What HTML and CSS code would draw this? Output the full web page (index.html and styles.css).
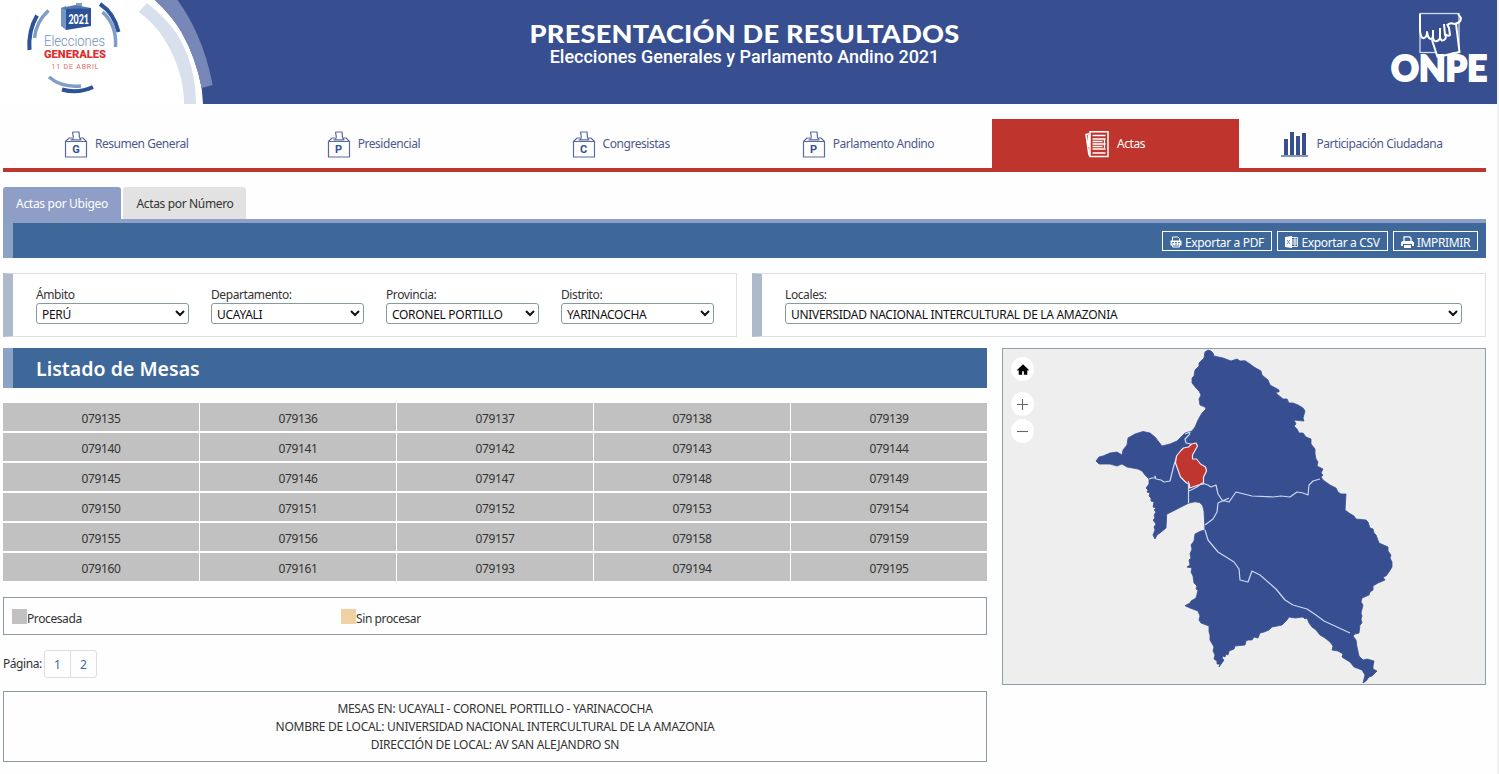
FILE: index.html
```html
<!DOCTYPE html>
<html lang="es">
<head>
<meta charset="utf-8">
<title>Presentación de Resultados</title>
<link rel="stylesheet" href="styles.css">
</head>
<body>
<svg class="defs" width="0" height="0">
  <symbol id="urn" viewBox="0 0 24 28">
    <path d="M1.500 10.500h21v15.500h-21zM1.500 10.500l3.500-3.500h3M22.500 10.500l-3.500-3.500h-2.500M8.500 1h6.500l.5 5.500 1.500 2.500M8.500 1l.8 5-.8 2.700M6.500 8.800h11" fill="none" stroke="#5a6a9f" stroke-width="1.200"/>
  </symbol>
</svg>
<header class="header">
  <svg class="brand" viewBox="0 0 220 104" width="220" height="104">
    <path d="M0 0H155Q173 17 182 33Q196 58 201.700 88L203 104H0z" fill="#fff"/>
    <path d="M155 0H177.500Q189 16 197 34Q207 56 212.700 85L201.700 88Q196 58 182 33Q173 17 155 0z" fill="#7788b8"/>
    <path d="M147 3Q166 18 177 34Q196 65 196 104H184Q184 70 163 37Q153 22 138.500 12z" fill="#d9e0ed"/>
    <g fill="none" stroke-width="4">
      <path d="M29.500 50Q28 31 37 15.500" stroke="#2c5298"/>
      <path d="M34.500 38Q36 22 48.500 10.500" stroke="#7f9dc6" stroke-width="3.500"/>
      <path d="M100 4Q114 13 118.500 32" stroke="#2c5298"/>
      <path d="M102.500 12Q117 25 115.500 47" stroke="#7f9dc6" stroke-width="3.500"/>
      <path d="M49 77Q62 88 81 86" stroke="#7f9dc6" stroke-width="3.500"/>
      <path d="M62 89.500Q78 94 93 87" stroke="#2c5298"/>
    </g>
    <path d="M76 3h6v6h-6z" fill="#7f9dc6"/>
    <path d="M61 8l5-2v24l-5-4z" fill="#7595c6"/>
    <path d="M61 8l14-3 16 3-25 2z" fill="#5578b0"/>
    <path d="M66 9l25-1v18l-25 4z" fill="#2c5298"/>
    <text x="68.500" y="23.500" textLength="20.500" lengthAdjust="spacingAndGlyphs" class="lg-year">2021</text>
    <text x="44" y="46" textLength="61" lengthAdjust="spacingAndGlyphs" class="lg-thin">Elecciones</text>
    <text x="44" y="58" textLength="62" lengthAdjust="spacingAndGlyphs" class="lg-red">GENERALES</text>
    <text x="51.500" y="69" textLength="47" class="lg-date">11 DE ABRIL</text>
  </svg>
  <div class="titles">
    <h1>PRESENTACIÓN DE RESULTADOS</h1>
    <p>Elecciones Generales y Parlamento Andino 2021</p>
  </div>
  <svg class="onpe" viewBox="1388 8 102 80" width="102" height="80">
    <rect x="1420" y="13.500" width="39" height="39" fill="none" stroke="#cfdcf3" stroke-width="1.300"/>
    <path d="M1456 25l3 26-22 5-5-16z" fill="#374f91"/>
    <path d="M1420 14V31q1 8 4 7t3-6q1 7 4 7 2 0 2-4M1433 30v8q1 4 4 3t3-4V28M1440 37q1 5 4 3t1-5l-1-11M1445 34q3 3 5 1l-1-7-2-4M1447 25q4-3 7-1 7-1 7-6l-3-4M1456 24l3.500 28-22 5-5.500-17" fill="none" stroke="#fff" stroke-width="2" stroke-linejoin="round"/>
    <text x="1391" y="80.500" textLength="96" lengthAdjust="spacingAndGlyphs" class="lg-onpe">ONPE</text>
  </svg>
</header>
<main class="main">
  <nav class="nav">
    <a class="nav-item"><span class="urn"><svg viewBox="0 0 24 28"><use href="#urn"/></svg><b>G</b></span>Resumen General</a>
    <a class="nav-item"><span class="urn"><svg viewBox="0 0 24 28"><use href="#urn"/></svg><b>P</b></span>Presidencial</a>
    <a class="nav-item"><span class="urn"><svg viewBox="0 0 24 28"><use href="#urn"/></svg><b>C</b></span>Congresistas</a>
    <a class="nav-item"><span class="urn"><svg viewBox="0 0 24 28"><use href="#urn"/></svg><b>P</b></span>Parlamento Andino</a>
    <a class="nav-item active"><svg width="24" height="28" viewBox="0 0 24 28"><path d="M5 1.800h18v24.700H5zM5 3.500L1 4.500 4 25.500M3.500 5v12" fill="none" stroke="#fff" stroke-width="1.500"/><path d="M7.500 5.500h13M7.500 9h13M7.500 11.500h10M7.500 14h13M7.500 16.500h10M7.500 19h13M7.500 23h13M19.500 9v9" stroke="#fff" stroke-width="1.300"/></svg>Actas</a>
    <a class="nav-item"><svg width="27" height="28" viewBox="0 0 27 28"><path d="M3 9h4v16H3zM9 2h4v23H9zM15 6h4v19h-4zM21 3h4v22h-4z" fill="#374f91"/><path d="M0 26h27" stroke="#8795bd" stroke-width="2"/></svg>Participación Ciudadana</a>
  </nav>
  <div class="tabs"><a class="tab on">Actas por Ubigeo</a><a class="tab">Actas por Número</a></div>
  <div class="toolbar">
    <a class="btn b1"><svg width="12" height="12" viewBox="0 0 12 12"><path d="M2.500 5V1h5.500l1.500 1.500V5M2.500 9v2h7V9" fill="none" stroke="#fff"/><path d="M.5 4.500h11v5H.5z" fill="#fff"/><path d="M2 6.500h2M5 6.500h2M8 6.500h2M2 8h1M5 8h2M8 8h1" stroke="#3e679a" stroke-width=".8"/></svg>Exportar a PDF</a>
    <a class="btn b2"><svg width="13" height="12" viewBox="0 0 13 12"><path d="M0 1l7-1v12l-7-1z" fill="#fff"/><path d="M7 1.500h5.500v9H7M7 4h5M7 6h5M7 8h5M10 2v8" fill="none" stroke="#fff" stroke-width=".9"/><path d="M2.200 4l2.500 4M4.700 4L2.200 8" stroke="#7c9abf"/></svg>Exportar a CSV</a>
    <a class="btn b3"><svg width="13" height="12" viewBox="0 0 13 12"><path d="M3 5V.8h5.500L10 2.300V5" fill="none" stroke="#fff" stroke-width="1.300"/><path d="M1.500 5h10l1.500 1.500V10h-2V8H2v2H0V6.500zM3 9h7v3H3z" fill="#fff"/></svg>IMPRIMIR</a>
  </div>
  <div class="filters">
    <section class="panel four">
      <label>Ámbito<select><option>PERÚ</option></select></label>
      <label>Departamento:<select><option>UCAYALI</option></select></label>
      <label>Provincia:<select><option>CORONEL PORTILLO</option></select></label>
      <label>Distrito:<select><option>YARINACOCHA</option></select></label>
    </section>
    <section class="panel one">
      <label>Locales:<select><option>UNIVERSIDAD NACIONAL INTERCULTURAL DE LA AMAZONIA</option></select></label>
    </section>
  </div>
  <div class="columns">
    <div class="left">
      <h2>Listado de Mesas</h2>
      <div class="mesas">
        <a>079135</a><a>079136</a><a>079137</a><a>079138</a><a>079139</a>
        <a>079140</a><a>079141</a><a>079142</a><a>079143</a><a>079144</a>
        <a>079145</a><a>079146</a><a>079147</a><a>079148</a><a>079149</a>
        <a>079150</a><a>079151</a><a>079152</a><a>079153</a><a>079154</a>
        <a>079155</a><a>079156</a><a>079157</a><a>079158</a><a>079159</a>
        <a>079160</a><a>079161</a><a>079193</a><a>079194</a><a>079195</a>
      </div>
      <div class="legend"><span><i class="gray"></i>Procesada</span><span><i class="sand"></i>Sin procesar</span></div>
      <div class="pager">Página:<div class="pages"><a>1</a><a>2</a></div></div>
      <div class="info"><p>MESAS EN: UCAYALI - CORONEL PORTILLO - YARINACOCHA</p><p>NOMBRE DE LOCAL: UNIVERSIDAD NACIONAL INTERCULTURAL DE LA AMAZONIA</p><p>DIRECCIÓN DE LOCAL: AV SAN ALEJANDRO SN</p></div>
    </div>
    <div class="map">
      <svg viewBox="1003 349 482 335" width="482" height="335">
        <path fill="#374f91" stroke="#374f91" stroke-width=".8" stroke-linejoin="round" d="M1208 350L1205 352 1204 358 1199 363 1199 366 1195 370 1194 376 1192 378 1192 383 1196 388 1199 391 1201 395 1199 399 1200 405 1205 407 1206 409 1202 413 1198 420 1195 427 1192 431 1185 433 1177 441 1170 444 1162 446 1155 437 1150 433 1143 431.500 1135 434 1128 438 1127 445 1123 450 1122 455 1117 452 1110 453 1103 456 1099 457 1096 461 1099 464 1110 464 1117 466 1122 464 1127 467 1138 469 1142 471 1145 475 1149 479 1149 484 1146 488 1148 490 1147 492 1150 493 1149 496 1151 498 1151 501 1154 502 1153 507 1156 508 1154 510 1156 512 1154 515 1155 518 1153 520 1156 524 1154 527 1155 530 1153 535 1155 539 1157 535 1160 533 1166 528 1166.700 514.300 1188.300 503.300Q1203 498 1204 511L1205 530 1201 531 1195 534 1194 541 1191 545 1192 549 1190 554 1191 558 1189 560 1190 565 1187 567 1192 568 1191 572 1193 576 1194 583 1197 586 1196 589 1198 590 1196 598 1191 601 1190 603 1185 605.700 1190 608 1198 611 1200 616 1199 620 1201 623 1209 626 1209 632 1210 635 1210 640 1214 647 1213 651 1215 655 1214 659 1217 661 1217 664 1220 664 1219 667 1224 660 1222 658 1223 656 1225 657 1226 654 1228 655 1229 651 1234 649 1235 646 1245 645 1246 641 1248 640 1252 640 1254 637 1258 638 1260 633 1264 632 1269 630 1272 627 1282 625 1287 620 1289 617 1295 618 1303 617 1305 619 1307 618 1309 623 1312 627 1316 630 1320 635 1325 638 1330 642 1333 646 1332 650 1338 651 1343 654 1342 657 1345 659 1350 662 1354 667 1362 670 1365 675 1363 683 1366 681 1369 677 1372 676 1377 671 1373 669 1373 666 1374 661 1367 659 1363 660 1359 656 1357 647 1356 640 1353 636 1355 634 1359 633 1360 625 1362 623 1361 619 1362 616 1361 613 1363 605 1361 602 1362 598 1369 595 1370 592 1373 590 1373 586 1378 583 1385 580 1383 577 1386 576 1389 572 1392 567 1392 562 1390 558 1391 555 1388 551 1388 547 1379 543 1376 535 1374 533 1373 529 1370 528 1368 522 1366 520 1356 519 1354 516 1349 513 1345 510 1346 494 1341 494 1338 492 1336 488 1330 485 1323 480 1321 477 1323 475 1321 473 1323 469 1317 466 1318 462 1316 459 1315 454 1315 449 1311 444 1311 439 1306 437 1303 433 1299 433 1297 429 1294 426 1296 424 1294 420 1304 421 1303 418 1305 411 1303 408 1298 405 1293 403 1289 403 1287 399 1283 399 1277 394 1276 392 1279 392 1279 390 1270 385 1268 380 1262 375 1261 371 1254 367 1250 364 1245 360.700 1240 361 1237 359 1231 361 1223 358 1214 356 1213 353 1211 351z"/>
        <g fill="none" stroke="#cbd8f2" stroke-width="1.200" stroke-linejoin="round">
          <path d="M1185 434l5-2-1 3-4 4 1 4 5 1M1149 479l3-1h3v-2l1 3 5 1 3 2 6-1 4-16 3-9"/>
          <path d="M1191.500 444l4.500-1 1.500 3-5 9v4l4 0 4 5 5 3 1 4-3 6v7l-5 1-9 3v-4l-3-1-6-6-5-14 1-7 4-5 3-3 5-1z" fill="#bf3530" stroke="#f7e8ee"/>
          <path d="M1188.500 481v22M1189 491l8-4 5-4 6 2 3 2 5-2 2 9 4 6 7 2 7-10 16 4 21 1 8-1 9 1 7-5 6 1 5 2 1-10 4-4 7-2M1229 498l-11 5-1 9-4 7-8 6M1205 530l3 10 10 12 16 10 5 7 1 11 8 2 4-11 8 4 16 14 9 11 8 5 14 4 9 6 8 6 26 12"/>
        </g>
      </svg>
      <div class="controls">
        <button><svg width="12" height="11" viewBox="0 0 14 12"><path d="M7 0l7 6.500-1 1-1-.8V12H8V8H6v4H2V6.700l-1 .8-1-1z"/></svg></button>
        <button class="plus"><svg width="11" height="11" viewBox="0 0 11 11"><path d="M5.500 0v11M0 5.500h11" stroke="#666" stroke-width="1.100"/></svg></button>
        <button><svg width="11" height="11" viewBox="0 0 11 11"><path d="M0 5.500h11" stroke="#666" stroke-width="1.100"/></svg></button>
      </div>
    </div>
  </div>
</main>
</body>
</html>
```
FILE: styles.css
```css
* { box-sizing: border-box; }
body { margin: 0; background: #fefefe; border-right: 2px solid #f1f1f1; min-height: 774px; font: 12px/18px "Noto Sans", "Open Sans", sans-serif; letter-spacing: -.3px; color: #333; }
h1, h2, p { margin: 0; }
.defs { position: absolute; }
.header { height: 104px; background: #374f91; display: flex; }
.brand { display: block; }
.titles { width: 489px; margin-left: 280px; padding-top: 20px; color: #fff; text-align: center; }
.titles h1 { font: 900 24px/28px Lato, sans-serif; letter-spacing: .2px; white-space: nowrap; transform: scaleX(1.13); }
.titles p { font: 500 18px/20px Roboto, sans-serif; letter-spacing: 0; white-space: nowrap; margin-top: -1px; }
.header .onpe { margin: 8px 7px 0 auto; }
.lg-year { font: 900 13px Lato, sans-serif; fill: #fff; letter-spacing: 0; }
.lg-thin { font: 300 14px Roboto, sans-serif; fill: #6f8fc0; letter-spacing: 0; }
.lg-red { font: 900 11.500px Roboto, sans-serif; fill: #dd2f2f; letter-spacing: 0; }
.lg-date { font: 400 7px Roboto, sans-serif; fill: #dc6a66; letter-spacing: 0; }
.lg-onpe { font: 900 36px Lato, sans-serif; fill: #fff; stroke: #fff; stroke-width: 2px; letter-spacing: 0; }
.main { width: 1483px; margin-left: 3px; padding-top: 15px; }
.nav { display: grid; grid-template-columns: repeat(4, 247.25px) 247px 247px; height: 53px; border-bottom: 4px solid #bc362e; }
.nav-item { display: flex; align-items: center; justify-content: center; gap: 7px; color: #4c5a8d; padding: 1px 1px 0 0; letter-spacing: -.45px; }
.nav-item.active { background: #bf352e; color: #fff; }
.nav-item > svg { margin-right: 1px; }
.urn { width: 24px; height: 28px; display: grid; margin-top: 2px; }
.urn > * { grid-area: 1 / 1; }
.urn svg { width: 24px; height: 28px; }
.urn b { font: 700 11px/12px Roboto, sans-serif; color: #374f91; text-align: center; margin-top: 13px; letter-spacing: 0; }
.tabs { display: flex; gap: 2px; margin-top: 15px; height: 32px; }
.tab { width: 118px; background: #e2e2e2; border-radius: 3px 3px 0 0; line-height: 34px; text-align: center; color: #333; }
.tab.on { background: #8f9ec6; color: #fff; }
.tab:last-child { width: 123px; padding-left: 1px; letter-spacing: -.35px; }
.toolbar { height: 39px; border-top: 4px solid #8d9fc6; background: linear-gradient(90deg, #8ba4c6 10px, #3e679a 10px); display: flex; justify-content: flex-end; gap: 5px; padding: 8px 8px 0 0; color: #fff; letter-spacing: -.35px; }
.btn { height: 20px; border: 1px solid #fff; display: flex; align-items: center; justify-content: center; gap: 3px; padding-top: 4px; white-space: nowrap; }
.btn svg { margin-top: -3px; }
.b1 { width: 110px; }
.b2 { width: 111px; }
.b3 { width: 85px; }
.filters { display: grid; grid-template-columns: 734px 734px; gap: 15px; margin-top: 15px; }
.panel { height: 64px; border: 1px solid #dbe0e3; border-left: 10px solid #adbacb; padding: 12px 23px 0; display: grid; background: #fff; }
.four { grid-template-columns: 153px 153px 153px 153px; gap: 22px; }
.panel label { display: flex; flex-direction: column; letter-spacing: -.4px; }
.panel select { height: 21px; width: 100%; margin-top: -1px; border: 1px solid #879a9e; border-radius: 3px; background: #fff; color: #111; font: 12px "Noto Sans", sans-serif; letter-spacing: -.3px; padding: 1px 1px 0 1px; }
.columns { display: grid; grid-template-columns: 984px 484px; gap: 15px; margin-top: 11px; align-items: start; }
h2 { height: 40px; border-left: 10px solid #8ba4c6; background: #3e679a; color: #fff; font: 600 19.500px/41px "Noto Sans", sans-serif; letter-spacing: .03px; padding-left: 23px; }
.mesas { display: grid; grid-template-columns: repeat(5, 196px); gap: 2px 1px; grid-auto-rows: 28px; margin-top: 15px; }
.mesas a { background: #c1c1c1; text-align: center; line-height: 31px; letter-spacing: -.35px; }
.legend { display: grid; grid-template-columns: 329px 1fr; margin-top: 16px; height: 38px; border: 1px solid #8e999f; padding: 11px 8px 0; letter-spacing: -.4px; }
.legend span { display: flex; line-height: 20px; }
.legend i { width: 15px; height: 15px; }
.gray { background: #c1c1c1; }
.sand { background: #efd1a3; }
.pager { display: flex; align-items: center; margin-top: 15px; height: 28px; gap: 2px; letter-spacing: -.45px; }
.pages { display: flex; border: 1px solid #ddd; border-radius: 3px; height: 28px; width: 53px; }
.pages a { flex: 1; text-align: center; line-height: 28px; color: #3e679a; }
.pages a + a { border-left: 1px solid #ddd; }
.info { margin-top: 13px; height: 71px; border: 1px solid #8e999f; padding-top: 8px; text-align: center; letter-spacing: -.28px; }
.map { height: 337px; border: 1px solid #8e9fa5; background: #eee; position: relative; }
.map > svg { display: block; }
.controls { position: absolute; left: 8px; top: 8px; display: flex; flex-direction: column; gap: 3px; }
.controls button { width: 23px; height: 24px; border: 0; border-radius: 50%; background: #fff; padding: 0; display: grid; place-items: center; }
.controls .plus { margin-top: 8px; }
```
